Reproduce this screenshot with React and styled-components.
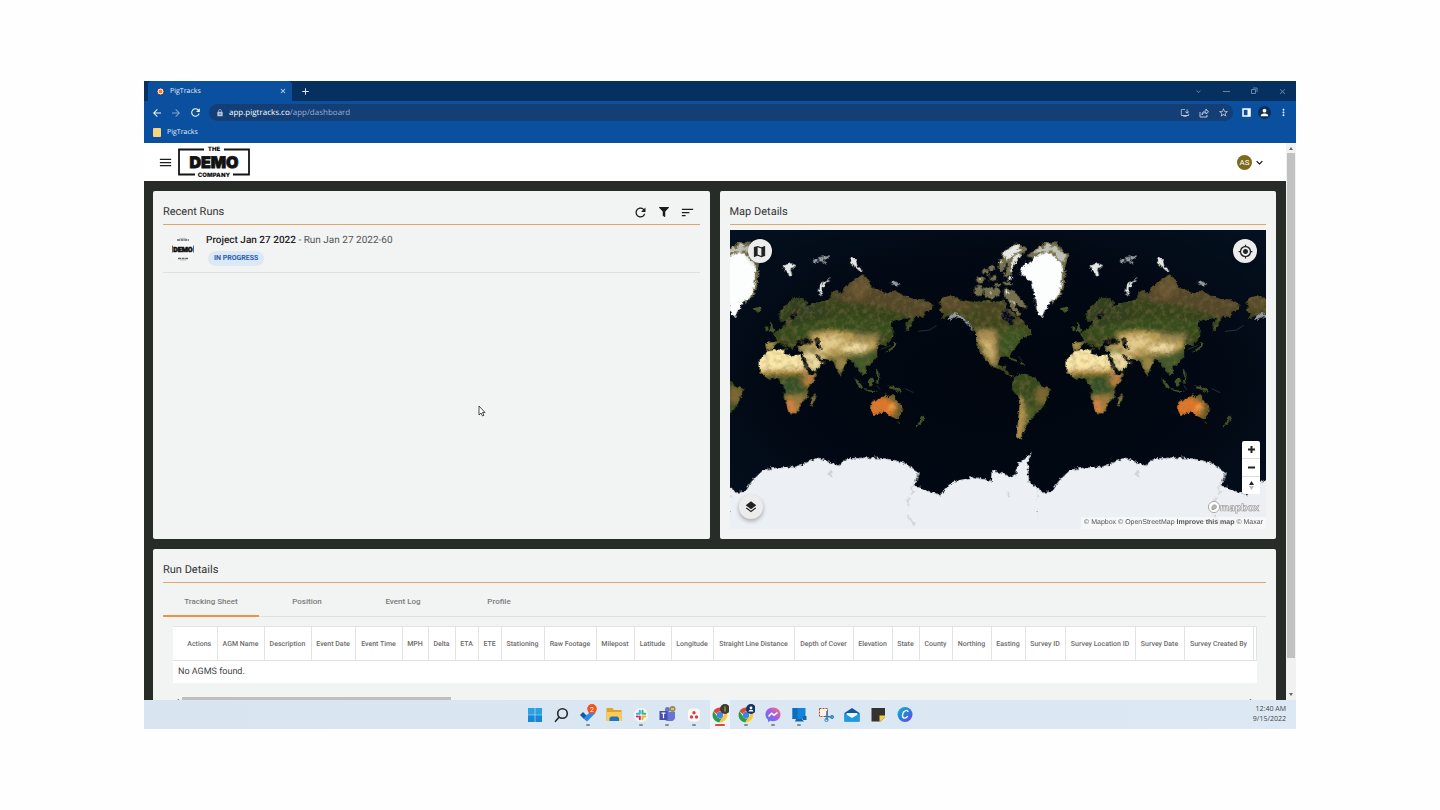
import React, { useState } from 'react'
import styled, { createGlobalStyle } from 'styled-components'
import { MdRefresh, MdSort, MdMenu, MdMap, MdLayers, MdMyLocation, MdLock, MdArrowBack, MdArrowForward, MdStarBorder, MdMoreVert, MdPerson, MdClose, MdAdd, MdKeyboardArrowDown, MdInstallDesktop } from 'react-icons/md'
import { FaFilter } from 'react-icons/fa'

const columns = [
    ['Actions', 44], ['AGM Name', 47], ['Description', 47], ['Event Date', 44], ['Event Time', 47],
    ['MPH', 26], ['Delta', 27], ['ETA', 23], ['ETE', 23], ['Stationing', 43], ['Raw Footage', 52],
    ['Milepost', 38], ['Latitude', 37], ['Longitude', 42], ['Straight Line Distance', 81],
    ['Depth of Cover', 59], ['Elevation', 39], ['State', 27], ['County', 33], ['Northing', 39],
    ['Easting', 34], ['Survey ID', 40], ['Survey Location ID', 70], ['Survey Date', 49],
    ['Survey Created By', 69], ['', undefined],
]
const tabs = ['Tracking Sheet', 'Position', 'Event Log', 'Profile']

const DemoLogo = () => (
    <svg width="74" height="32" viewBox="0 0 74 32" role="img" aria-label="The Demo Company">
        <path d="M27 3.500H2v25h16M47 3.500h25v25H56" fill="none" stroke="#151515" strokeWidth="1.800" />
        <g fill="#111" textAnchor="middle" fontFamily="Inter, sans-serif" fontWeight="900">
            <text x="37" y="5" fontSize="6">THE</text>
            <text x="37" y="21.500" fontSize="16" stroke="#111" strokeWidth=".8">DEMO</text>
            <text x="37" y="31" fontSize="6">COMPANY</text>
        </g>
    </svg>
)

const RunLogo = () => (
    <svg width="24" height="24" viewBox="0 0 24 24" aria-hidden="true">
        <circle cx="12" cy="12" r="12" fill="#f6f6f6" />
        <path d="M1.500 8.500v7M22.500 8.500v7" stroke="#666" strokeWidth="1" />
        <path d="M6 3h12M7 21.500h10" stroke="#666" strokeWidth="1.500" strokeDasharray="3 .6" />
        <path d="M8.500 1.400h7M9 23h6" stroke="#bbb" strokeWidth="1" />
        <text x="12" y="15" fontSize="7" fontWeight="900" fontFamily="Roboto, sans-serif" textAnchor="middle" fill="#111" stroke="#111" strokeWidth=".6">DEMO</text>
    </svg>
)

const World = () => (
    <g id="world">
        <g filter="url(#land)">
            <g clipPath="url(#asiaClip)">
                <rect x="120" y="140" width="530" height="320" fill="#35441e" />
                <g filter="url(#soft)">
                    <path d="M320 210L425 140 660 200 650 300 540 262 460 240 380 232z" fill="#54472a" />
                    <path d="M375 190L430 150 455 190 420 230z" fill="#675330" />
                    <path d="M180 240L260 215 330 270 200 300z" fill="#303f20" />
                    <path d="M150 320L270 290 400 275 520 290 520 340 440 310 300 320 240 345z" fill="#344d1e" />
                    <path d="M130 345h36v30h-36z" fill="#a9904c" />
                    <path d="M265 325L330 315 390 320 470 330 475 365 430 385 355 390 310 405 280 375 235 372 235 360 280 350z" fill="#c2a45c" />
                    <path d="M285 340L350 330 380 350 330 372 300 385z" fill="#e3cb8b" />
                    <path d="M355 368L400 355 450 358 430 378 380 378z" fill="#f3dfa7" />
                    <path d="M395 325L480 325 465 350 400 345z" fill="#9a8650" />
                    <path d="M340 395L385 395 370 435 350 440z" fill="#a08a46" />
                    <path d="M380 392L470 375 460 420 430 450 400 425z" fill="#42592c" />
                    <path d="M250 375L290 385 320 410 275 445 245 392z" fill="#f0dda1" />
                </g>
            </g>
            <g clipPath="url(#africaClip)">
                <rect x="110" y="365" width="190" height="210" fill="#3b5022" />
                <g filter="url(#soft)">
                    <path d="M105 360H250L262 438 210 445 160 440 108 438z" fill="#f9e6a8" />
                    <path d="M110 436L262 430 264 447 110 452z" fill="#b98e43" />
                    <path d="M250 440L300 440 262 490 248 470z" fill="#c08244" />
                    <path d="M190 510L262 505 240 570 200 570z" fill="#9b7a3c" />
                    <path d="M200 522L225 530 222 562 204 562z" fill="#e08245" />
                    <path d="M180 462L245 460 250 505 195 505z" fill="#35512a" />
                </g>
            </g>
            {/* inland seas, red sea and the gulf */}
            <g fill="#020a16">
                <path d="M233 346l14-8 16 3 18 10-20 5-26 2zM282 340l12-2 6 8-3 12 8 14-8 2-9-14zM207 283l12-2 10-14 4-18-5 1-8 14-14 12z" />
                <path d="M240 386l10 4 10 24 12 26 20-6 2 8-26 5-16-28z" />
                <path d="M284 384l8 4 16 16 14 2-6 8-14-4-12-12z" />
            </g>
            <path d="M285 506l2 14-10 25-7-8 4-20z" fill="#776b35" />
            <g clipPath="url(#ausClip)">
                <rect x="440" y="500" width="115" height="90" fill="#6c5c2a" />
                <g filter="url(#soft)">
                    <path d="M450 520L495 515 530 535 524 572 450 575z" fill="#e27729" />
                    <path d="M508 538h16v18h-16z" fill="#f3a850" />
                </g>
            </g>
            <g fill="#465329">
                <path d="M150 288l8 12 8 16-20 4 4-14zM136 304l8-2 1 12-9 4z" />
                <path d="M443 466l14-9 6 8-6 14-13 1zM500 480l14 3 16 4 18 14-14-2-12-6-14-4zM403 457l12 10 14 20-6 3-14-16zM430 491l20 3 26 4-22 2-22-5zM468 462l10-2-4 6 2 10-6 2zM468 430l6 4 2 18 6 8-8-2-6-12z" />
                <path d="M525 346l4 8-6 14-16 10-14 4 14-10 12-10zM608 571l8 6-12 16-12 12-6 2 12-16zM530 588l8 2-4 8zM98 250l12-5 14 3-4 8-14 2z" />
                <path d="M870 398l18 4 10 8-16-3zM900 412l12 2 2 4-12-2z" />
            </g>
            <g clipPath="url(#northClip)">
                <rect x="650" y="200" width="300" height="270" fill="#3f451f" />
                <g filter="url(#soft)">
                    <path d="M650 210L740 205 760 255 655 260z" fill="#5a4b29" />
                    <path d="M750 235L880 230 890 290 780 275z" fill="#474522" />
                    <path d="M768 312L828 312 835 410 815 425 768 345z" fill="#ab8e53" />
                    <path d="M785 345L815 340 822 400 800 390z" fill="#d0b571" />
                    <path d="M832 310L935 310 870 400 836 385z" fill="#3a5221" />
                </g>
            </g>
            <path d="M844 262l10-14 16 2 6 10-2 8 10 10-2 18-8 4-6-10-14-6-10-12z" fill="#041020" />
            <g clipPath="url(#southClip)">
                <rect x="870" y="440" width="130" height="210" fill="#35491f" />
                <g filter="url(#soft)">
                    <path d="M950 485L995 485 975 540 945 530z" fill="#7b6632" />
                    <path d="M895 510L912 520 920 580 905 645 885 645z" fill="#bb964f" />
                    <path d="M912 545L950 545 920 600z" fill="#56602b" />
                </g>
            </g>
        </g>
        <g filter="url(#coast)">
            <path d="M682 282l10-16 14-4 18 10 16 12 14 16 8 20-10-12-14-18-18-12-16-4-12 8z" fill="#c9ccc8" opacity=".75" />
            {/* arctic islands */}
            <g fill="#75704d">
                <path d="M768 158l16-6 10 8-8 14-16-2zM764 184l16-4 10 12-6 18-14 2-6-14zM784 136l18-6 4 10-16 6zM804 126l14-8 8 12-16 8zM790 188l16-4 14 8 8-8 12 8-4 18-18 10-20-4-8-14zM808 156l18-8 6 14-20 6zM826 172l18 2-4 8-16-2zM800 148l10-2-2 8z" />
                <path d="M834 112l16-20 12 10-6 28-12 8-8-8zM848 144l22-10 6 12-20 10zM850 168l22 2 4 10-22-2zM852 190l24 2 16 12 8 14 20 24-2 10-18-8-12-10 0 14 16 18-6 6-24-22-4-22-18-14z" />
                <path d="M846 82l16-14 26-14 30 10 2 10-16 14-20 24-14 34-12-6 6-26-12-6z" />
            </g>
            <g fill="#e5e8e3">
                <path d="M848 86l14-16 28-14 14 4-16 10 20 2-16 12-18 6-12 14zM880 98l16-14 8 4-18 22-12 30-4-8zM862 156l14-4 0 10-14 4zM856 194l8 4 2 8-8-2zM776 160l8-2-4 6zM808 200l8-4-4 8zM838 112l8-10-2 14zM876 224l8 10-6 2z" />
                <path d="M188 120l24-7 16 6-8 10-10 2 6 16-8 6-6-18-8 2zM390 98l10-4 8 12 4 14 16 16-8 2-14-12-10-8z" />
                <path d="M276 104l16-4 4 8-14 4zM294 96l16-4 2 14-14 2zM312 92l14 0-2 10-10 0zM304 108l14-1-4 7zM512 170l12-6 8 8 12 2-14 6-14-4z" opacity=".65" />
                <path d="M295 208l4-24 12-16 24-12-16 12-10 16-6 24z" />
            </g>
            <path d="M920 92L945 70 975 50 1015 52 1026 74 1048 86 1037 116 1034 180 1020 214 998 234 985 206 1010 120 990 80 940 96z" fill="#77714f" />
            <path d="M940 82l18-18 10 8 14-18 14 2-8 12 20-8 8 12 18 12 6 6-10 20-14-10-20-26-30 6z" fill="#bfc1b4" />
            <path d="M900 140L914 112 928 116 940 96 965 86 985 78 1005 96 1028 114 1024 180 1016 212 986 236 966 276 952 260 946 225 936 170z" fill="#fcfdfd" />
            <path d="M29 790L50 803 72 799 95 768 130 733 170 728 225 725 262 710 295 698 325 710 355 721 380 700 440 697 500 700 550 712 595 740 582 780 620 797 660 808 700 770 760 755 815 768 818 738 850 745 870 757 888 748 895 715 935 683 923 715 928 770 955 792V940H25z" fill="#eceff3" />
            <path d="M600 740l-18 34-8 14 8 12-10 8M570 818l-8 10 4 14M560 870l14 18 10 14M862 800l6 14M330 735l4 18-10-6M1000 880l8-14" stroke="#b9bcc0" strokeWidth="5" fill="none" opacity=".6" />
        </g>
        <path d="M650 300l-22 14-34 4M482 372l30-12M470 480l10 14M555 490l25 12M895 392l12 16" stroke="#394650" strokeWidth="2" fill="none" />
    </g>
)

const WorldMap = () => (
    <MapArt viewBox="29 13 1612 899" preserveAspectRatio="none" aria-hidden="true">
        <defs>
            <filter id="coast" x="-5%" y="-5%" width="110%" height="110%">
                <feTurbulence type="fractalNoise" baseFrequency=".09" numOctaves="3" seed="4" result="n" />
                <feDisplacementMap in="SourceGraphic" in2="n" scale="14" xChannelSelector="R" yChannelSelector="G" />
            </filter>
            <filter id="land" x="-5%" y="-5%" width="110%" height="110%">
                <feTurbulence type="fractalNoise" baseFrequency=".09" numOctaves="3" seed="4" result="n" />
                <feDisplacementMap in="SourceGraphic" in2="n" scale="12" xChannelSelector="R" yChannelSelector="G" result="shape" />
                <feTurbulence type="fractalNoise" baseFrequency=".06" numOctaves="4" seed="9" />
                <feColorMatrix values="0 0 0 0 .2  0 0 0 0 .17  0 0 0 0 .06  1 0 0 0 -.42" result="dark" />
                <feComposite in="dark" in2="shape" operator="in" result="grain" />
                <feMerge><feMergeNode in="shape" /><feMergeNode in="grain" /></feMerge>
            </filter>
            <filter id="soft"><feGaussianBlur stdDeviation="6" /></filter>
            <clipPath id="asiaClip">
                <path d="M135 352L160 350 172 345 155 325 178 312 192 302 196 290 180 286 175 265 195 240 215 220 236 213 262 230 252 245 268 240 300 228 330 222 333 200 348 194 366 205 372 185 400 165 425 148 450 165 450 185 475 192 500 205 522 194 550 210 580 220 612 222 642 240 635 252 615 258 610 277 590 270 579 282 573 305 561 320 556 298 570 276 545 280 515 288 512 300 523 325 510 345 492 362 478 352 472 370 470 395 455 415 436 422 438 440 428 450 415 435 405 418 398 408 385 400 376 415 361 452 348 432 340 408 322 402 300 398 313 412 292 430 272 440 258 415 245 390 250 382 235 374 232 362 248 358 236 346 222 362 214 376 205 360 194 353 206 374 196 372 180 352 166 358 155 373 138 373z" />
            </clipPath>
            <clipPath id="africaClip">
                <path d="M118 405L140 378 170 372 188 374 194 386 215 392 240 388 255 425 268 449 291 446 280 468 265 486 262 515 246 530 233 558 212 568 202 545 190 515 194 490 182 472 172 457 145 461 118 440z" />
            </clipPath>
            <clipPath id="ausClip">
                <path d="M449 547L455 530 480 520 496 507 508 516 518 503 530 525 549 546 541 570 528 581 510 572 495 560 460 569z" />
            </clipPath>
            <clipPath id="northClip">
                <path d="M655 252L668 240 655 230 668 216 690 211 720 222 760 229 800 224 840 228 850 222 862 232 856 246 880 262 892 270 910 285 924 304 940 326 912 335 900 348 885 368 870 386 878 404 872 404 862 390 840 396 834 418 848 424 860 420 856 434 875 448 888 460 870 452 845 434 815 424 790 395 770 362 767 320 742 285 705 262 682 272 660 285 672 264z" />
            </clipPath>
            <clipPath id="southClip">
                <path d="M875 480L885 455 900 444 940 455 965 480 991 490 985 512 970 545 945 570 925 590 915 613 906 625 907 644 890 637 894 590 899 545 897 517 880 497z" />
            </clipPath>
            <radialGradient id="sea" cx=".5" cy=".5" r=".7">
                <stop offset="0" stopColor="#01060f" />
                <stop offset=".6" stopColor="#020914" />
                <stop offset="1" stopColor="#041120" />
            </radialGradient>
        </defs>
        <rect x="29" y="13" width="1612" height="899" fill="url(#sea)" />
        <World />
        <use href="#world" x="922" />
        <use href="#world" x="-922" />
    </MapArt>
)

const Chrome = ({ badge }) => (
    <>
        <circle cx="9" cy="11" r="7.500" fill="#fff" />
        <path d="M2.500 7.200A7.500 7.500 0 0 1 15.500 7.500H9a3.500 3.500 0 0 0-3.300 2.400z" fill="#df4535" />
        <path d="M2.500 7.200a7.500 7.500 0 0 0 5.800 11.200l3.200-5A3.500 3.500 0 0 1 5.600 11.500z" fill="#2c9b4e" />
        <path d="M15.500 7.500A7.500 7.500 0 0 1 8.300 18.400l3.700-5.600a3.500 3.500 0 0 0 0-4.300z" fill="#f8ca3b" />
        <circle cx="9" cy="11" r="3.200" fill="#3f84e6" />
        <circle cx="14" cy="5" r="5" fill={badge} />
    </>
)

// taskbar drawings, all on an 18x20 grid
const apps = [
    { name: 'Start', art: <><path d="M2 4h6.700v6.700H2zM9.300 4H16v6.700H9.300z" fill="#2ba0e3" /><path d="M2 11.300h6.700V18H2zM9.300 11.300H16V18H9.300z" fill="#1288d6" /></> },
    { name: 'Search', art: <g fill="none" stroke="#26292d" strokeWidth="1.600" strokeLinecap="round"><circle cx="10.500" cy="9.500" r="4.800" /><path d="M7 13.300L3.500 17.300" /></g> },
    { name: 'To Do', dot: true, art: <><path d="M1 11l3-3 4 4-3 3z" fill="#1557a8" /><path d="M4.500 14.500L13 6l3.500 3L8 17.500z" fill="#2c8ae8" /><circle cx="13" cy="4.800" r="4.800" fill="#f2511b" /><text x="13" y="7.500" fontSize="7" fontFamily="Roboto, sans-serif" fill="#fff" textAnchor="middle">2</text></> },
    { name: 'File Explorer', art: <><path d="M1.500 4h6l1.500 2h7.500v11h-15z" fill="#e0a22b" /><path d="M1.500 8h15v9h-15z" fill="#fbcb55" /><path d="M4.500 17v-3l1.500-1.500h6.500L14 14v3z" fill="#2176c4" /></> },
    { name: 'Slack', dot: true, art: <><circle cx="9" cy="11" r="7" fill="#f7f8f9" /><g strokeWidth="2" strokeLinecap="round"><path d="M7.800 6.800v3M4.800 9.800h3" stroke="#36b5dc" /><path d="M10.500 6.800v3M13.200 9.800h-1" stroke="#2eb67d" /><path d="M10.500 12.500v2.700M10.500 12.500h2.700" stroke="#ecb22e" /><path d="M7.800 12.500v2.700M4.800 12.500h1" stroke="#d52b5b" /></g></> },
    { name: 'Teams', dot: true, art: <><circle cx="9.500" cy="5.500" r="2.500" fill="#6973d2" /><path d="M6 8h11v5a4 4 0 0 1-3 4H9a4 4 0 0 1-3-3z" fill="#6973d2" /><path d="M1.500 7h8v9h-8z" fill="#444eb0" /><path d="M3.500 9.200h4M5.500 9.200v5" stroke="#fff" strokeWidth="1.200" /><circle cx="14.500" cy="5" r="3" fill="#9a8d45" /><path d="M13 5h3" stroke="#eee" /></> },
    { name: 'Asana', dot: true, art: <><rect x="3" y="4.500" width="12" height="13" rx="4" fill="#fbf8f8" /><g fill="#e33c3c"><circle cx="9" cy="8.800" r="1.700" /><circle cx="6.500" cy="13" r="1.700" /><circle cx="11.500" cy="13" r="1.700" /></g></> },
    { name: 'Chrome', active: true, art: <><Chrome badge="#403e2d" /><path d="M14 2.500v5" stroke="#9b8d55" strokeWidth="1.500" /></> },
    { name: 'Chrome Work', dot: true, art: <><Chrome badge="#12345f" /><circle cx="14" cy="3.800" r="1.400" fill="#fff" /><path d="M11.500 7.500c0-2.500 5-2.500 5 0z" fill="#fff" /></> },
    { name: 'Messenger', dot: true, art: <><path d="M9 3.500c-4.500 0-7.500 3-7.500 7 0 2.200 1 4 2.500 5.200V18l2.300-1.200c5.600 1.500 10.200-1.600 10.200-6.300 0-4-3-7-7.500-7z" fill="url(#msg)" /><path d="M4.500 12.500l3-3.300 2.500 2 3.500-2.700" fill="none" stroke="#fff" strokeWidth="1.500" /></> },
    { name: 'Remote Desktop', dot: true, art: <><path d="M2.500 4h13v11h-13z" fill="#1184dc" /><path d="M2.500 4h5v11h-5z" fill="#0d6dbd" /><path d="M6 15h6l2 2.500H5zM13 12h3.500v4H13z" fill="#1764a5" /></> },
    { name: 'Snipping Tool', art: <><path d="M2.500 4.500h8v8h-8z" fill="#fff4ec" stroke="#b84a26" strokeDasharray="2 1" /><path d="M10 7v9M8 12.500l8 .5" stroke="#397ca9" strokeWidth="1.600" /><circle cx="9.500" cy="16" r="1.600" fill="none" stroke="#2587c8" /><circle cx="15" cy="13" r="1.600" fill="none" stroke="#2587c8" /></> },
    { name: 'Mail', art: <><path d="M1.500 9L9 4 16.500 9v8.500h-15z" fill="#0c56a3" /><path d="M3.500 9h11v5h-11z" fill="#eef6fc" /><path d="M1.500 9.500L9 14l7.500-4.500v8h-15z" fill="#1a9be6" /></> },
    { name: 'Sticky Notes', art: <><path d="M2.500 4h13.500v9l-4.500 4.500h-9z" fill="#33332f" /><path d="M10.500 11.500H16V13l-4.500 4.500h-1z" fill="#f3cf3f" /></> },
    { name: 'Canva', art: <><circle cx="9" cy="10.500" r="7.500" fill="url(#canva)" /><path d="M12 8c0-3-5-1.500-5.500 3-.3 4 3.500 3.800 5.200 1.200" fill="none" stroke="#fff" strokeWidth="1.300" /></> },
]

const App = () => {
    const [tab, setTab] = useState('Tracking Sheet')
    return (
        <Stage>
            <GlobalStyle />
            <Desktop>
                <TabStrip>
                    <BrowserTab>
                        <svg width="9" height="9" viewBox="0 0 9 9"><circle cx="4.500" cy="4.500" r="3.500" fill="#fff" stroke="#4a3035" strokeWidth="1" /><circle cx="4.500" cy="4.500" r="2" fill="#e9803a" /></svg>
                        <span>PigTracks</span>
                        <ChromeButton aria-label="Close tab"><MdClose size={8} /></ChromeButton>
                    </BrowserTab>
                    <ChromeButton aria-label="New tab"><MdAdd size={11} /></ChromeButton>
                    <WindowButtons>
                        <ChromeButton aria-label="Search tabs"><MdKeyboardArrowDown size={9} /></ChromeButton>
                        <ChromeButton aria-label="Minimize"><svg width="7" height="7"><path d="M0 3.500h7" stroke="currentColor" /></svg></ChromeButton>
                        <ChromeButton aria-label="Restore"><svg width="8" height="8" fill="none" stroke="currentColor"><path d="M1.500 2.500h4v4h-4zM3 1h4v4" /></svg></ChromeButton>
                        <ChromeButton aria-label="Close"><MdClose size={9} /></ChromeButton>
                    </WindowButtons>
                </TabStrip>
                <AddressRow>
                    <ChromeButton aria-label="Back"><MdArrowBack size={12} /></ChromeButton>
                    <ChromeButton aria-label="Forward" $dim><MdArrowForward size={12} /></ChromeButton>
                    <ChromeButton aria-label="Reload"><MdRefresh size={13} /></ChromeButton>
                    <AddressBar>
                        <MdLock size={8} />
                        <Url role="textbox" aria-label="Address" contentEditable suppressContentEditableWarning><b>app.pigtracks.co</b>/app/dashboard</Url>
                        <ChromeButton aria-label="Install app"><MdInstallDesktop size={10} /></ChromeButton>
                        <ChromeButton aria-label="Share"><svg width="10" height="10" viewBox="0 0 10 10" fill="none" stroke="currentColor"><path d="M1 4v5h7V7M3 7c0-3 2-4 4-4V1l2.500 3L7 6V4.500C5 4.500 4 5 3 7z" /></svg></ChromeButton>
                        <ChromeButton aria-label="Bookmark"><MdStarBorder size={11} /></ChromeButton>
                    </AddressBar>
                    <ChromeButton aria-label="Side panel"><svg width="9" height="9"><path d="M1 1h7v7H1z" fill="none" stroke="#fff" strokeWidth="1.500" /><path d="M5.500 1H8v7H5.500z" fill="#fff" /></svg></ChromeButton>
                    <Profile aria-label="Profile"><MdPerson size={11} /></Profile>
                    <ChromeButton aria-label="Menu"><MdMoreVert size={11} /></ChromeButton>
                </AddressRow>
                <Bookmarks>
                    <Folder />
                    <a href="#pigtracks">PigTracks</a>
                </Bookmarks>

                <Viewport>
                    <Page>
                        <Header>
                            <IconButton aria-label="Open menu"><MdMenu size={15} /></IconButton>
                            <DemoLogo />
                            <Account aria-label="Account">
                                <Avatar>AS</Avatar>
                                <MdKeyboardArrowDown size={13} />
                            </Account>
                        </Header>
                        <Dashboard>
                            <TopPanels>
                                <Panel>
                                    <PanelTitle>
                                        <h2>Recent Runs</h2>
                                        <Actions>
                                            <IconButton aria-label="Refresh"><MdRefresh size={15} /></IconButton>
                                            <IconButton aria-label="Filter"><FaFilter size={10} /></IconButton>
                                            <IconButton aria-label="Sort"><MdSort size={15} /></IconButton>
                                        </Actions>
                                    </PanelTitle>
                                    <Run>
                                        <RunLogo />
                                        <RunText>
                                            <RunName><b>Project Jan 27 2022</b> - Run Jan 27 2022-60</RunName>
                                            <Chip>IN PROGRESS</Chip>
                                        </RunText>
                                    </Run>
                                </Panel>
                                <Panel>
                                    <PanelTitle><h2>Map Details</h2></PanelTitle>
                                    <MapBox>
                                        <WorldMap />
                                        <MapButton $spot="style" aria-label="Map style"><MdMap size={15} /></MapButton>
                                        <MapButton $spot="locate" aria-label="Locate me"><MdMyLocation size={15} /></MapButton>
                                        <MapButton $spot="layers" aria-label="Layers"><MdLayers size={14} /></MapButton>
                                        <ZoomControl>
                                            <button aria-label="Zoom in"><svg width="9" height="9"><path d="M4.500 1v7M1 4.500h7" stroke="#222" strokeWidth="2" /></svg></button>
                                            <button aria-label="Zoom out"><svg width="9" height="9"><path d="M1 4.500h7" stroke="#222" strokeWidth="2" /></svg></button>
                                            <button aria-label="Reset north"><svg width="9" height="11"><path d="M4.500 1L7 5H2z" fill="#222" /><path d="M4.500 10L7 6H2z" fill="#bbb" /></svg></button>
                                        </ZoomControl>
                                        <MapboxLogo viewBox="0 0 54 14" role="img" aria-label="Mapbox">
                                            <circle cx="7" cy="7" r="5.600" fill="#fff" stroke="#aaa" strokeWidth="1" />
                                            <path d="M5 9.500c-.7-3.700 1.600-5.300 3.600-4.300 1.700 1.200.8 4.300-3.600 4.300z" fill="#bbb" stroke="#888" strokeWidth=".8" />
                                            <text x="13" y="10.500" fontSize="10" fontFamily="Inter, sans-serif" fontWeight="700" fill="#fff" stroke="#a2a2a2" strokeWidth=".7">mapbox</text>
                                        </MapboxLogo>
                                        <Attribution>
                                            <a href="#mapbox">© Mapbox</a> <a href="#osm">© OpenStreetMap</a> <a href="#improve"><b>Improve this map</b></a> <a href="#maxar">© Maxar</a>
                                        </Attribution>
                                    </MapBox>
                                </Panel>
                            </TopPanels>
                            <Panel>
                                <PanelTitle><h2>Run Details</h2></PanelTitle>
                                <Tabs role="tablist">
                                    {tabs.map((name) => (
                                        <Tab key={name} role="tab" aria-selected={tab === name} $active={tab === name} onClick={() => setTab(name)}>{name}</Tab>
                                    ))}
                                </Tabs>
                                <SheetWrap>
                                    <Sheet>
                                        <colgroup>{columns.map(([name, width]) => <col key={name} style={{ width }} />)}</colgroup>
                                        <thead>
                                            <tr>{columns.map(([name]) => <th key={name}>{name}</th>)}</tr>
                                        </thead>
                                        <tbody>
                                            <tr><td colSpan={columns.length}>No AGMS found.</td></tr>
                                        </tbody>
                                    </Sheet>
                                </SheetWrap>
                                <ScrollX><Arrow $dir="left" /><ThumbX /><Arrow $dir="right" /></ScrollX>
                            </Panel>
                        </Dashboard>
                    </Page>
                    <ScrollY><Arrow $dir="up" /><ThumbY /><Arrow $dir="down" /></ScrollY>
                </Viewport>

                <Taskbar>
                    <svg width="0" height="0" aria-hidden="true">
                        <linearGradient id="msg" x1="0" y1="1" x2="1" y2="0"><stop stopColor="#3b82f6" /><stop offset=".5" stopColor="#a35be8" /><stop offset="1" stopColor="#ff7271" /></linearGradient>
                        <linearGradient id="canva" x1="0" y1="0" x2="1" y2="1"><stop stopColor="#10b6cf" /><stop offset=".5" stopColor="#287fdd" /><stop offset="1" stopColor="#7a3be0" /></linearGradient>
                    </svg>
                    <Apps>
                        {apps.map((app) => (
                            <AppButton key={app.name} aria-label={app.name} $active={app.active} $dot={app.dot}>
                                <svg width="18" height="20" viewBox="0 0 18 20">{app.art}</svg>
                            </AppButton>
                        ))}
                    </Apps>
                    <Clock><span>12:40 AM</span><span>9/15/2022</span></Clock>
                </Taskbar>
                <Cursor viewBox="0 0 8 12" aria-hidden="true">
                    <path d="M1 1v9l2-2 1.500 3 1.400-.7L4.500 7.500H7z" fill="#fff" stroke="#222" strokeWidth=".8" />
                </Cursor>
            </Desktop>
        </Stage>
    )
}

export default App

const GlobalStyle = createGlobalStyle`
    * { box-sizing: border-box; }
    body { margin: 0; background: #fefefe; font-family: Roboto, sans-serif; text-rendering: geometricPrecision; }
    button { font: inherit; color: inherit; border: 0; padding: 0; background: none; cursor: pointer; }
    a { color: inherit; text-decoration: none; }
    svg { display: block; flex: none; }
`;

const Stage = styled.main`
    height: 100vh;
    padding: 10vh 10vw;
`;

const Desktop = styled.div`
    position: relative;
    display: flex;
    flex-direction: column;
    height: 100%;
    overflow: hidden;
    font-size: 9px;
`;

const TabStrip = styled.div`
    display: flex;
    align-items: center;
    gap: 8px;
    height: 20px;
    background: #05305f;
    color: #e6edf5;
    font-family: 'Open Sans', sans-serif;
    font-size: 7px;
`;

const BrowserTab = styled.div`
    display: flex;
    align-items: center;
    gap: 5px;
    width: 144px;
    height: 100%;
    margin-left: 4px;
    padding: 0 5px 0 8px;
    border-radius: 4px 4px 0 0;
    background: #0a509f;
    span { flex: 1; }
`;

const ChromeButton = styled.button`
    display: flex;
    opacity: ${(p) => (p.$dim ? 0.5 : 1)};
`;

const WindowButtons = styled.div`
    display: flex;
    align-items: center;
    gap: 20px;
    margin-left: auto;
    padding-right: 9px;
    color: #6485ab;
`;

const AddressRow = styled.div`
    display: flex;
    align-items: center;
    gap: 7px;
    height: 23px;
    padding: 0 7px;
    background: #0a509f;
    color: #f2f6fa;
`;

const AddressBar = styled.div`
    display: flex;
    flex: 1;
    align-items: center;
    gap: 9px;
    height: 17px;
    margin-right: 2px;
    padding: 0 4px 0 7px;
    border-radius: 9px;
    background: #133e76;
    color: #b5c6da;
`;

const Url = styled.div`
    flex: 1;
    margin-left: -4px;
    font-family: 'Open Sans', sans-serif;
    font-size: 8px;
    line-height: 12px;
    color: #94b1d3;
    b { font-weight: 400; color: #fff; }
`;

const Profile = styled.button`
    display: flex;
    padding: 1px;
    border-radius: 50%;
    background: #0d2f57;
    color: #fff;
`;

const Bookmarks = styled.div`
    display: flex;
    align-items: center;
    gap: 6px;
    height: 19px;
    padding: 0 9px 3px;
    background: #0a509f;
    color: #e6edf5;
    font-family: 'Open Sans', sans-serif;
    font-size: 7px;
`;

const Folder = styled.span`
    width: 8px;
    height: 9px;
    border-radius: 1px;
    background: #f6d67e;
`;

const Viewport = styled.div`
    display: flex;
    flex: 1;
    min-height: 0;
    overflow: hidden;
`;

const Page = styled.div`
    flex: 1;
    min-width: 0;
    background: #272c29;
`;

const Header = styled.header`
    display: flex;
    align-items: center;
    gap: 4px;
    height: 38px;
    padding: 0 20px 0 14px;
    background: #fff;
`;

const IconButton = styled.button`
    display: flex;
    color: #1c1c1c;
`;

const Account = styled.button`
    display: flex;
    align-items: center;
    gap: 1px;
    margin-left: auto;
`;

const Avatar = styled.span`
    width: 15px;
    height: 15px;
    border-radius: 50%;
    background: #7c6a1d;
    color: #fff;
    font-size: 8px;
    line-height: 15px;
    text-align: center;
`;

const Dashboard = styled.div`
    display: grid;
    gap: 10px;
    padding: 10px 10px 10px 9px;
`;

const TopPanels = styled.div`
    display: grid;
    grid-template-columns: 1fr 1fr;
    gap: 10px;
`;

const Panel = styled.section`
    min-width: 0;
    padding: 10px;
    border-radius: 2px;
    background: #f2f3f3;
`;

const PanelTitle = styled.div`
    display: flex;
    align-items: center;
    justify-content: space-between;
    height: 24px;
    padding-bottom: 1px;
    border-bottom: 1px solid #dfa66a;
    h2 {
        margin: 0;
        font-size: 11px;
        font-weight: 400;
        line-height: 12px;
        color: #333;
    }
`;

const Actions = styled.div`
    display: flex;
    align-items: center;
    gap: 11px;
    padding-right: 5px;
`;

const Run = styled.div`
    display: flex;
    align-items: center;
    gap: 11px;
    height: 48px;
    padding-left: 8px;
    border-bottom: 1px solid #dfe0e0;
`;

const RunText = styled.div`
    padding-top: 3px;
`;

const RunName = styled.div`
    margin-bottom: 4px;
    font-size: 10px;
    line-height: 12px;
    color: #555;
    b { font-weight: 500; color: #222; }
`;

const Chip = styled.span`
    display: inline-block;
    margin-left: 2px;
    padding: 0 6px;
    border-radius: 8px;
    background: #dde8f6;
    color: #2660ad;
    font-size: 7px;
    font-weight: 700;
    line-height: 15px;
`;

const MapBox = styled.div`
    position: relative;
    height: 299px;
    margin-top: 5px;
    overflow: hidden;
`;

const MapArt = styled.svg`
    width: 100%;
    height: 100%;
`;

const spots = {
    style: 'top: 9px; left: 18px;',
    locate: 'top: 9px; right: 9px;',
    layers: 'bottom: 10px; left: 9px;',
};

const MapButton = styled.button`
    position: absolute;
    ${(p) => spots[p.$spot]}
    display: flex;
    align-items: center;
    justify-content: center;
    width: 24px;
    height: 24px;
    border-radius: 50%;
    background: #ececec;
    color: #222;
    box-shadow: 0 2px 4px rgba(0, 0, 0, 0.3);
`;

const ZoomControl = styled.div`
    position: absolute;
    right: 6px;
    bottom: 35px;
    width: 18px;
    border-radius: 2px;
    background: #fff;
    button {
        display: flex;
        align-items: center;
        justify-content: center;
        width: 100%;
        height: 17px;
    }
    button + button { height: 18px; border-top: 1px solid #ddd; }
`;

const MapboxLogo = styled.svg`
    position: absolute;
    right: 5px;
    bottom: 15px;
    width: 54px;
    height: 14px;
`;

const Attribution = styled.div`
    position: absolute;
    right: 0;
    bottom: 0;
    padding: 0 3px;
    background: rgba(255, 255, 255, 0.5);
    color: #555;
    font-family: 'Liberation Sans', sans-serif;
    font-size: 7px;
    line-height: 12px;
`;

const Tabs = styled.div`
    display: flex;
    height: 34px;
    border-bottom: 1px solid #dfe0e0;
`;

const Tab = styled.button`
    width: 96px;
    margin-bottom: -1px;
    padding-top: 4px;
    border-bottom: 2px solid ${(p) => (p.$active ? '#ec9442' : 'transparent')};
    color: #7c7c7c;
    font-size: 8px;
    font-weight: 500;
`;

const SheetWrap = styled.div`
    margin: 9px 9px 0 10px;
    overflow: hidden;
`;

const Sheet = styled.table`
    width: 100%;
    table-layout: fixed;
    border-collapse: collapse;
    background: #fff;
    th {
        height: 34px;
        padding: 0;
        border: 1px solid #e2e3e3;
        color: #6c6c6c;
        font-size: 7px;
        font-weight: 500;
        text-align: center;
        white-space: nowrap;
    }
    th:first-child { padding-left: 9px; border-left: 0; }
    td {
        height: 22px;
        padding: 0 5px;
        color: #444;
        font-size: 9px;
    }
`;

const ScrollX = styled.div`
    display: flex;
    align-items: center;
    justify-content: space-between;
    gap: 2px;
    height: 10px;
    margin: 13px 13px 0;
`;

const ThumbX = styled.span`
    width: 25%;
    height: 8px;
    margin-right: auto;
    background: #bfbfbf;
`;

const ScrollY = styled.div`
    display: flex;
    flex-direction: column;
    align-items: center;
    width: 10px;
    padding: 4px 0;
    background: #f1f1f1;
`;

const ThumbY = styled.span`
    width: 8px;
    height: 92%;
    margin: 3px 0 auto;
    background: #c1c1c1;
`;

const turns = { up: 0, right: 90, down: 180, left: 270 };

const Arrow = styled.i`
    flex: none;
    width: 4px;
    height: 3px;
    background: #666;
    clip-path: polygon(50% 0, 100% 100%, 0 100%);
    transform: rotate(${(p) => turns[p.$dir]}deg);
`;

const Taskbar = styled.footer`
    display: grid;
    grid-template-columns: 1fr auto 1fr;
    align-items: center;
    flex: none;
    height: 29px;
    background: linear-gradient(90deg, #d8e5f0, #dde8f5);
`;

const Apps = styled.div`
    display: flex;
    justify-content: space-between;
    width: 390px;
    height: 29px;
`;

const AppButton = styled.button`
    position: relative;
    display: flex;
    align-items: center;
    justify-content: center;
    width: 20px;
    padding-bottom: 2px;
    background: ${(p) => (p.$active ? '#eef3f9' : 'none')};
    &::after {
        content: '';
        position: absolute;
        bottom: 3px;
        left: 50%;
        width: ${(p) => (p.$active ? 10 : 4)}px;
        height: 2px;
        border-radius: 1px;
        background: ${(p) => (p.$active ? '#d94f35' : p.$dot ? '#858b91' : 'transparent')};
        transform: translateX(-50%);
    }
`;

const Clock = styled.div`
    display: flex;
    flex-direction: column;
    align-items: flex-end;
    padding-right: 10px;
    color: #444;
    font-family: 'Open Sans', sans-serif;
    font-size: 7px;
    line-height: 10px;
`;

const Cursor = styled.svg`
    position: absolute;
    top: 50%;
    left: 29%;
    width: 8px;
    height: 12px;
`;
